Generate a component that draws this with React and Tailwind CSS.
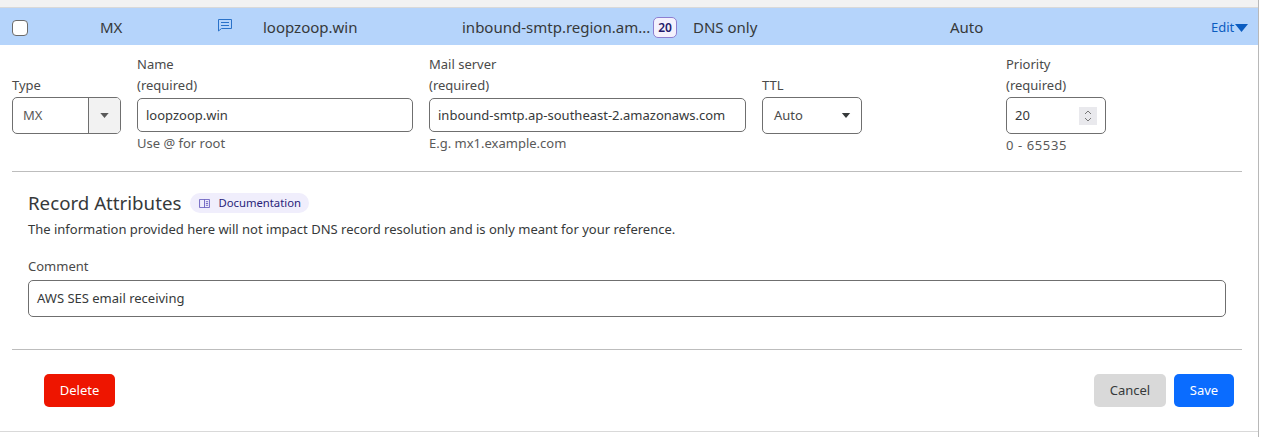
import React from "react";

const Label = ({ lines }) => (
  <div className="flex h-[42px] flex-col justify-end text-[13px] leading-[21px] text-[#4a4a4a]">
    {lines.map((line) => (
      <div key={line}>{line}</div>
    ))}
  </div>
);

const Hint = ({ children }) => (
  <div className="mt-[1px] text-[13px] leading-[20px] text-[#595959]">{children}</div>
);

const Caret = ({ className }) => (
  <svg viewBox="0 0 10 6" className={className} fill="currentColor">
    <path d="M0 0h10L5 6z" />
  </svg>
);

const App = () => {
  return (
    <div className="h-[437px] w-[1259px] overflow-hidden border-r border-[#b8b8b8] bg-white font-['Noto_Sans',sans-serif]">
      <div className="h-[8px] border-b border-[#d9d9d9] bg-[#f2f2f2]" />

      {/* selected record row */}
      <div className="flex h-[37px] items-center bg-[#b5d4fb] pt-[2px] text-[15px] text-[#36393a]">
        <div className="ml-[12px] mt-[1px] h-[16px] w-[16px] rounded-[4px] border border-[#6b6b6b] bg-white" />
        <div className="ml-[72px] w-[118px]">MX</div>
        <svg viewBox="0 0 14 13" className="mb-[5px] h-[13px] w-[14px] text-[#2a72c9]" fill="none" stroke="currentColor" strokeWidth="1">
          <path d="M.5.5h13v9H3.5L.5 12z" />
          <path d="M3 3.5h8M3 6.5h8" />
        </svg>
        <div className="ml-[31px] w-[199px]">loopzoop.win</div>
        <div className="w-[188px] whitespace-nowrap">inbound-smtp.region.am...</div>
        <div className="ml-[3px] flex h-[21px] w-[24px] items-center justify-center rounded-[5px] border border-[#8d7fd0] bg-[#f4f1fd] text-[12px] font-semibold text-[#241a6b]">
          20
        </div>
        <div className="ml-[16px] w-[257px]">DNS only</div>
        <div className="w-[261px]">Auto</div>
        <div className="flex items-center text-[13px] text-[#0b5cc0]">
          Edit
          <Caret className="ml-[1px] h-[8px] w-[13px]" />
        </div>
      </div>

      {/* edit form */}
      <div className="flex items-start px-[12px] pt-[9px]">
        <div className="w-[109px]">
          <Label lines={["Type"]} />
          <div className="mt-[1px] flex h-[37px] overflow-hidden rounded-[5px] border border-[#6f6f6f] text-[13px] text-[#595959]">
            <div className="flex flex-1 items-center pl-[10px]">MX</div>
            <div className="flex w-[32px] items-center justify-center border-l border-[#6f6f6f] bg-[#f2f2f2]">
              <Caret className="h-[5px] w-[9px] text-[#595959]" />
            </div>
          </div>
        </div>

        <div className="ml-[16px] w-[276px]">
          <Label lines={["Name", "(required)"]} />
          <div className="mt-[2px] flex h-[34px] items-center rounded-[5px] border border-[#6f6f6f] pl-[8px] pt-[2px] text-[13px] text-[#36393a]">
            loopzoop.win
          </div>
          <Hint>Use @ for root</Hint>
        </div>

        <div className="ml-[16px] w-[317px]">
          <Label lines={["Mail server", "(required)"]} />
          <div className="mt-[2px] flex h-[34px] items-center rounded-[5px] border border-[#6f6f6f] pl-[8px] pt-[2px] text-[13px] text-[#36393a]">
            inbound-smtp.ap-southeast-2.amazonaws.com
          </div>
          <Hint>E.g. mx1.example.com</Hint>
        </div>

        <div className="ml-[16px] w-[100px]">
          <Label lines={["TTL"]} />
          <div className="mt-[1px] flex h-[37px] items-center justify-between rounded-[5px] border border-[#6f6f6f] pl-[11px] pr-[10px] text-[13px] text-[#4a4a4a]">
            Auto
            <Caret className="h-[5px] w-[10px] text-[#36393a]" />
          </div>
        </div>

        <div className="ml-[144px] w-[100px]">
          <Label lines={["Priority", "(required)"]} />
          <div className="mt-[1px] flex h-[37px] items-center justify-between rounded-[5px] border border-[#6f6f6f] pl-[8px] pr-[8px] text-[13px] text-[#36393a]">
            20
            <div className="flex h-[18px] w-[18px] items-center justify-center bg-[#e9e9ed]">
              <svg viewBox="0 0 10 14" className="h-[14px] w-[10px] text-[#777777]" fill="none" stroke="currentColor" strokeWidth="1">
                <path d="M2 5l3-3 3 3M2 9l3 3 3-3" />
              </svg>
            </div>
          </div>
          <Hint>
            <span className="tracking-[0.6px]">0 - 65535</span>
          </Hint>
        </div>
      </div>

      <div className="ml-[12px] mr-[16px] mt-[16px] border-t border-[#bdbdbd]" />

      {/* record attributes */}
      <div className="pl-[28px] pr-[32px]">
        <div className="mt-[21px] flex h-[20px] items-center">
          <h3 className="text-[18.7px] leading-[20px] text-[#36393a]">Record Attributes</h3>
          <div className="ml-[9px] flex h-[20px] w-[119px] items-center rounded-full bg-[#f0eefc] pl-[9px] text-[11.3px] text-[#2a1f7a]">
            <svg viewBox="0 0 12 10" className="h-[9px] w-[11px] text-[#6a5fc0]" fill="none" stroke="currentColor" strokeWidth="1">
              <path d="M.5.5h11v9H.5zM6 .5v9M7.5 3h2.5M7.5 5h2.5M7.5 7h2.5" />
            </svg>
            <span className="ml-[8px]">Documentation</span>
          </div>
        </div>
        <p className="mt-[6px] text-[13px] leading-[20px] text-[#36393a]">
          The information provided here will not impact DNS record resolution and is only meant for your reference.
        </p>
        <div className="mt-[17px] text-[13px] leading-[20px] text-[#4a4a4a]">Comment</div>
        <div className="mt-[4px] flex h-[37px] w-[1198px] items-center rounded-[5px] border border-[#6f6f6f] pl-[8px] text-[13px] text-[#36393a]">
          AWS SES email receiving
        </div>
      </div>

      <div className="ml-[12px] mr-[16px] mt-[32px] border-t border-[#bdbdbd]" />

      {/* actions */}
      <div className="mt-[24px] flex items-center justify-between pl-[44px] pr-[24px]">
        <button className="h-[33px] w-[71px] rounded-[5px] bg-[#ee1500] text-[13px] text-white">Delete</button>
        <div className="flex gap-[8px]">
          <button className="h-[33px] w-[72px] rounded-[5px] bg-[#d9d9d9] text-[13px] text-[#36393a]">Cancel</button>
          <button className="h-[33px] w-[60px] rounded-[5px] bg-[#0a6cff] text-[13px] text-white">Save</button>
        </div>
      </div>

      <div className="mt-[24px] border-t border-[#d9d9d9]" />
    </div>
  );
};

export default App;
